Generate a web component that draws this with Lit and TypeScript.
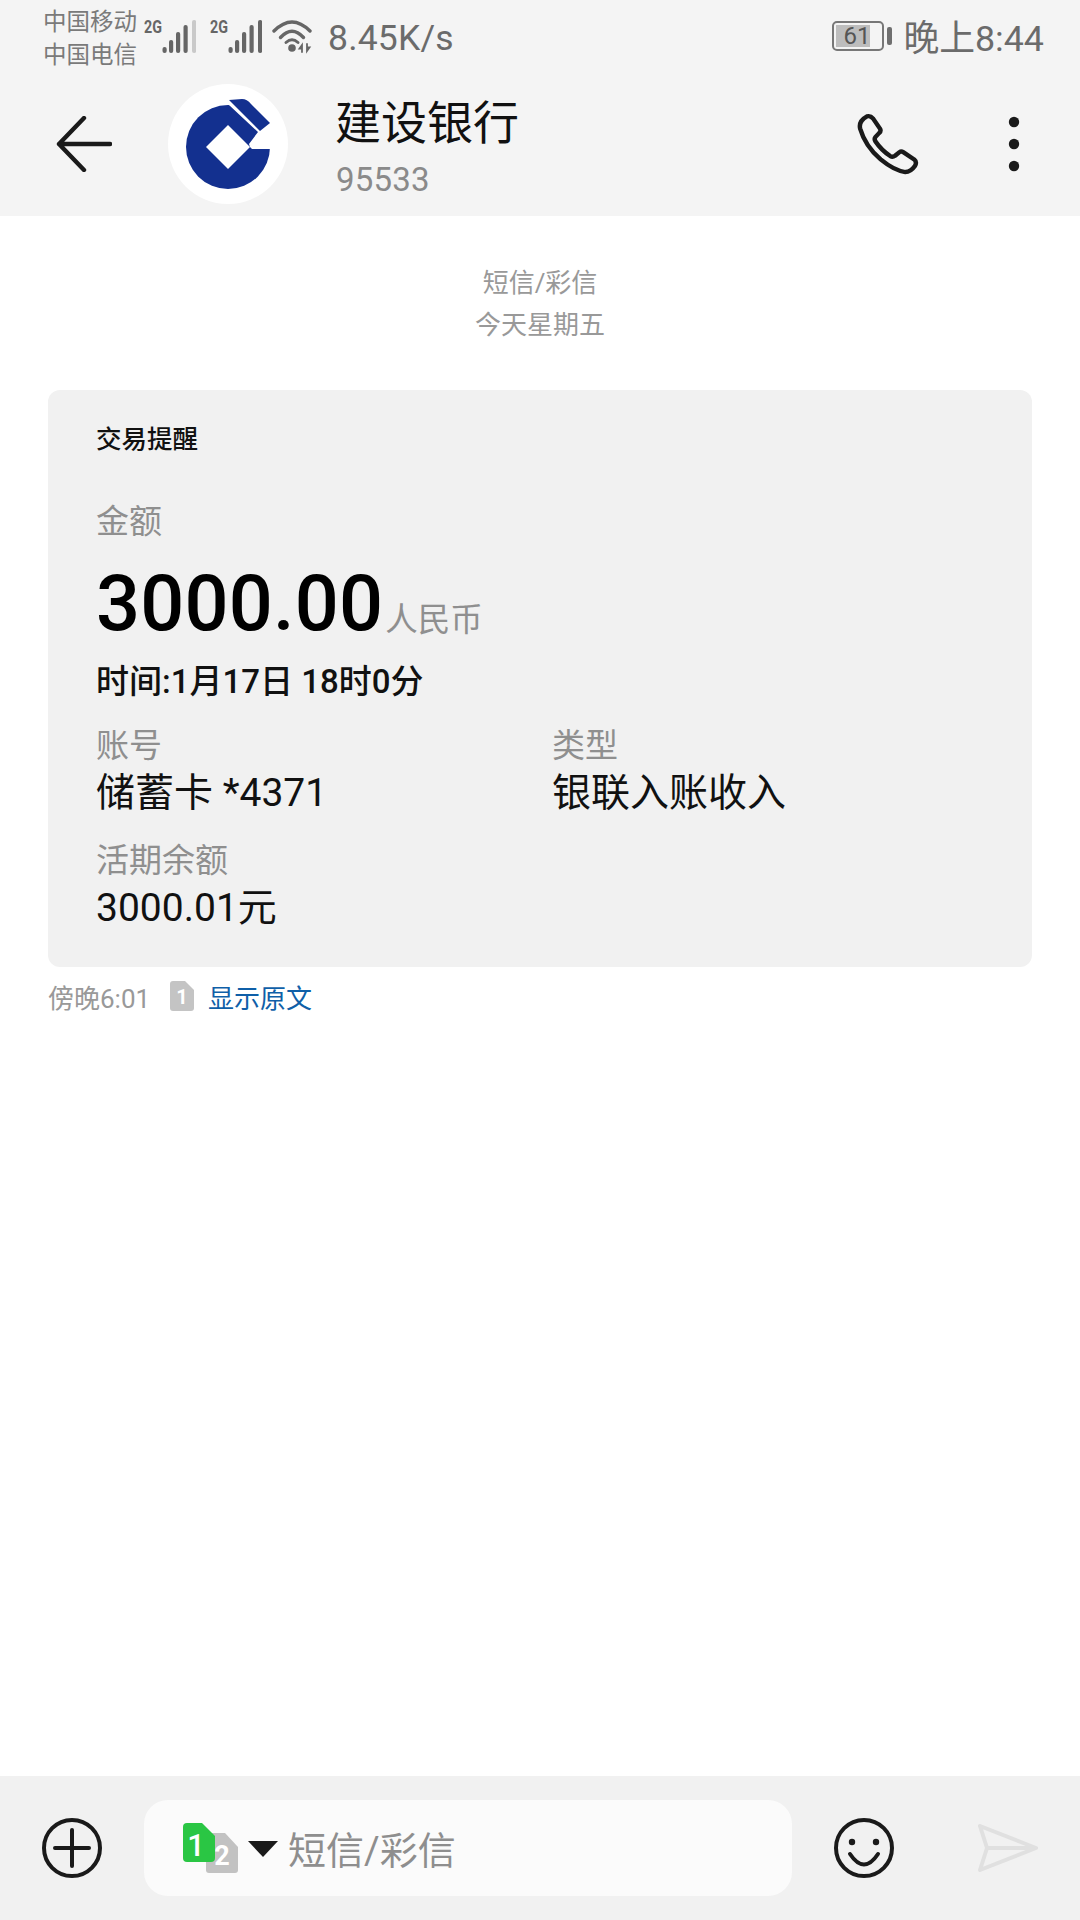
import { LitElement, html, css, svg } from "lit";
import { customElement } from "lit/decorators.js";

const bars = (level: number) => {
  const xs = [0.5, 7, 14, 21.5, 30];
  const tops = [28, 21, 13, 6, 1];
  return xs.map(
    (x, i) =>
      svg`<rect x=${x + 18} y=${tops[i]} width="4.2" height=${34 - tops[i]} rx="2" fill=${i < level ? "#666" : "#c9c9c9"}></rect>`
  );
};

const signal = (level: number) => html`
  <svg viewBox="0 -4 52 40" width="52" height="40">
    <text x="0" y="14" font-size="18" font-weight="700" fill="#666" font-family="Roboto, sans-serif" textLength="18" lengthAdjust="spacingAndGlyphs">2G</text>
    ${bars(level)}
  </svg>
`;

@customElement("app-root")
export class AppRoot extends LitElement {
  static styles = css`
    :host {
      display: flex;
      flex-direction: column;
      width: 1080px;
      height: 1920px;
      background: #fff;
      font-family: Roboto, "Noto Sans CJK SC", sans-serif;
      color: #000;
      overflow: hidden;
    }
    svg { display: block; flex: none; }
    .top { background: #f4f4f4; }
    .status {
      height: 72px;
      display: flex;
      align-items: center;
      padding: 0 36px 0 43px;
      color: #6b6b6b;
    }
    .carriers { width: 93px; font-size: 23.5px; line-height: 33px; color: #7a7a7a; white-space: nowrap; margin-top: 5px; }
    .sig { margin-top: -2px; margin-left: 8px; }
    .sig2 { margin-top: -2px; margin-left: 14px; }
    .wifi { margin-left: 10px; margin-top: 2px; }
    .speed { margin-left: 14px; font-size: 35.5px; line-height: 44px; margin-top: 4px; letter-spacing: 0.2px; }
    .right { margin-left: auto; display: flex; align-items: center; }
    .battery { width: 52px; height: 30px; box-sizing: border-box; border: 2px solid #777; border-radius: 5px; padding: 2px; }
    .fill { width: 34px; height: 22px; background: #bdbdbd; font-size: 24px; line-height: 22px; color: #555; text-align: right; white-space: nowrap; }
    .nub { width: 5px; height: 18px; background: #6f6f6f; border-radius: 2px; margin-left: 3px; }
    .time { margin-left: 11px; font-size: 35.8px; line-height: 44px; margin-top: 5px; }

    .header { height: 144px; display: flex; align-items: center; padding: 0 60px 0 56px; }
    .logo { margin-left: 56px; }
    .who { margin-left: 47px; margin-top: 10px; }
    .name { font-size: 46px; line-height: 54px; color: #111; }
    .num { font-size: 33px; line-height: 44px; color: #8a8a8a; margin-top: 8px; margin-left: 1px; letter-spacing: 0.2px; }
    .phone { margin-left: auto; margin-top: -2px; }
    .dots { margin-left: 88px; }

    .body { flex: 1; padding-top: 46px; }
    .note { text-align: center; font-size: 26px; line-height: 42px; color: #999; }
    .card {
      margin: 44px 48px 0;
      padding: 32px 48px 34px;
      background: #f1f1f1;
      border-radius: 12px;
    }
    .title { font-size: 25.5px; line-height: 34px; font-weight: 500; color: #111; }
    .label { font-size: 33px; line-height: 44px; color: #8f8f8f; }
    .label.first { margin-top: 44px; }
    .amount { display: flex; align-items: flex-end; height: 90px; margin-top: 15px; }
    .big { font-size: 77.5px; line-height: 90px; font-weight: 500; letter-spacing: 0.2px; }
    .unit { font-size: 32.5px; line-height: 44px; color: #8f8f8f; margin: 0 0 7px 2px; }
    .when { font-size: 33px; line-height: 44px; font-weight: 500; margin-top: 11px; color: #111; }
    .grid { display: grid; grid-template-columns: 456px 1fr; margin-top: 20px; }
    .value { font-size: 39px; line-height: 50px; color: #111; }
    .mt { margin-top: 21px; }

    .foot { display: flex; align-items: center; height: 36px; margin: 11px 48px 0; font-size: 26px; }
    .stamp { color: #999; width: 100px; white-space: nowrap; }
    .simS { margin-left: 22px; }
    .link { margin-left: 14px; color: #0f5fa8; }

    .bar { height: 144px; background: #f1f1f1; display: flex; align-items: center; padding-left: 42px; }
    .input {
      width: 648px;
      height: 96px;
      margin-left: 42px;
      padding-left: 39px;
      box-sizing: border-box;
      background: #fbfbfb;
      border-radius: 24px;
      display: flex;
      align-items: center;
    }
    .tri { margin-left: 10px; margin-top: 2px; }
    .ph { margin-left: 10px; font-size: 38px; color: #8e8e8e; margin-top: -2px; }
    .smile { margin-left: 42px; }
    .send { margin-left: 84px; }
  `;

  render() {
    return html`
      <div class="top">
        <div class="status">
          <div class="carriers">中国移动<br />中国电信</div>
          <div class="sig">${signal(4)}</div>
          <div class="sig2">${signal(5)}</div>
          <svg class="wifi" viewBox="0 0 42 36" width="42" height="36" fill="none" stroke="#666" stroke-linecap="round">
            <path d="M2 12 Q20 -6 38 12" stroke-width="3.4"></path>
            <path d="M8.5 18.5 Q20 6 31.5 18.5" stroke-width="3.4"></path>
            <path d="M14 23.5 Q20 18 26 23.5" stroke-width="3"></path>
            <circle cx="20" cy="29" r="3.8" fill="#666" stroke="none"></circle>
            <path d="M30 33 V26 L27.5 29.5 H30 M35 25 V32 L37.5 28.5 H35" stroke-width="1.8"></path>
          </svg>
          <div class="speed">8.45K/s</div>
          <div class="right">
            <div class="battery"><div class="fill">61</div></div>
            <div class="nub"></div>
            <div class="time">晚上8:44</div>
          </div>
        </div>
        <div class="header">
          <svg viewBox="0 0 56 56" width="56" height="56" fill="none" stroke="#1a1a1a" stroke-width="4.4" stroke-linecap="round" stroke-linejoin="round">
            <path d="M3 28 H54 M28 2 L3 28 L28 54"></path>
          </svg>
          <svg class="logo" viewBox="0 0 120 120" width="120" height="120">
            <circle cx="60" cy="60" r="60" fill="#fff"></circle>
            <circle cx="60" cy="63" r="42" fill="#13308f"></circle>
            <path d="M61 21 L90 48 L81 60 L82 63 L84 65 H104 V25 L85 14 H61 Z" fill="#fff"></path>
            <path d="M60 41 L82 63 L60 85 L38 63 Z" fill="#fff"></path>
            <path d="M61 16 L74 15 Q79 15 83 20 L102 39 L92 47 Z" fill="#13308f"></path>
          </svg>
          <div class="who">
            <div class="name">建设银行</div>
            <div class="num">95533</div>
          </div>
          <svg class="phone" viewBox="915 335 190 190" width="65" height="63" fill="none" stroke="#1a1a1a" stroke-width="13" stroke-linejoin="round" preserveAspectRatio="none">
            <path d="M950 348 Q960 345 968 355 L988 385 Q992 392 986 398 L975 410 Q970 416 975 424 Q992 450 1018 468 Q1025 472 1032 467 L1045 456 Q1050 452 1056 456 L1088 478 Q1097 486 1090 498 Q1078 516 1062 516 Q1030 512 990 478 Q945 438 930 385 Q925 362 950 348 Z"></path>
          </svg>
          <svg class="dots" viewBox="0 0 12 56" width="12" height="56" fill="#1a1a1a">
            <circle cx="6" cy="6" r="5.2"></circle>
            <circle cx="6" cy="28" r="5.2"></circle>
            <circle cx="6" cy="50" r="5.2"></circle>
          </svg>
        </div>
      </div>

      <div class="body">
        <div class="note">短信/彩信</div>
        <div class="note">今天星期五</div>
        <div class="card">
          <div class="title">交易提醒</div>
          <div class="label first">金额</div>
          <div class="amount"><span class="big">3000.00</span><span class="unit">人民币</span></div>
          <div class="when">时间:1月17日 18时0分</div>
          <div class="grid">
            <div>
              <div class="label">账号</div>
              <div class="value">储蓄卡 *4371</div>
            </div>
            <div>
              <div class="label">类型</div>
              <div class="value">银联入账收入</div>
            </div>
          </div>
          <div class="mt">
            <div class="label">活期余额</div>
            <div class="value">3000.01元</div>
          </div>
        </div>
        <div class="foot">
          <span class="stamp">傍晚6:01</span>
          <svg class="simS" viewBox="0 0 24 30" width="24" height="30">
            <path d="M3 0 H15 L24 9 V27 Q24 30 21 30 H3 Q0 30 0 27 V3 Q0 0 3 0 Z" fill="#c4c4c4"></path>
            <text x="12" y="23" text-anchor="middle" font-size="20" font-weight="700" fill="#fff" font-family="Roboto, sans-serif">1</text>
          </svg>
          <span class="link">显示原文</span>
        </div>
      </div>

      <div class="bar">
        <svg viewBox="0 0 60 60" width="60" height="60" fill="none" stroke="#1a1a1a" stroke-width="4" stroke-linecap="round">
          <circle cx="30" cy="30" r="28"></circle>
          <path d="M13 30 H47 M30 12 V48"></path>
        </svg>
        <div class="input">
          <svg viewBox="0 0 55 50" width="55" height="50">
            <path d="M26 10 H42 L55 24 V47 Q55 50 52 50 H26 Q23 50 23 47 V13 Q23 10 26 10 Z" fill="#c2c2c2"></path>
            <text x="39" y="42" text-anchor="middle" font-size="27" font-weight="700" fill="#fff" font-family="Roboto, sans-serif">2</text>
            <path d="M4 0 H19 L32 13 V35 Q32 39 28 39 H4 Q0 39 0 35 V4 Q0 0 4 0 Z" fill="#2ac644"></path>
            <text x="13" y="33" text-anchor="middle" font-size="31" font-weight="500" fill="#fff" font-family="Roboto, sans-serif">1</text>
          </svg>
          <svg class="tri" viewBox="0 0 30 16" width="30" height="16"><path d="M0 0 H30 L15 16 Z" fill="#1a1a1a"></path></svg>
          <span class="ph">短信/彩信</span>
        </div>
        <svg class="smile" viewBox="0 0 60 60" width="60" height="60" fill="none" stroke="#1a1a1a" stroke-width="4" stroke-linecap="round">
          <circle cx="30" cy="30" r="28"></circle>
          <circle cx="18" cy="24" r="3.2" fill="#1a1a1a" stroke="none"></circle>
          <circle cx="42" cy="24" r="3.2" fill="#1a1a1a" stroke="none"></circle>
          <path d="M16 36 Q30 57 44 36"></path>
        </svg>
        <svg class="send" viewBox="0 0 60 48" width="60" height="48" fill="none" stroke="#e0e0e0" stroke-width="4" stroke-linejoin="round">
          <path d="M2 2 L58 24 L2 46 L9 24 Z M9 24 H58"></path>
        </svg>
      </div>
    `;
  }
}
